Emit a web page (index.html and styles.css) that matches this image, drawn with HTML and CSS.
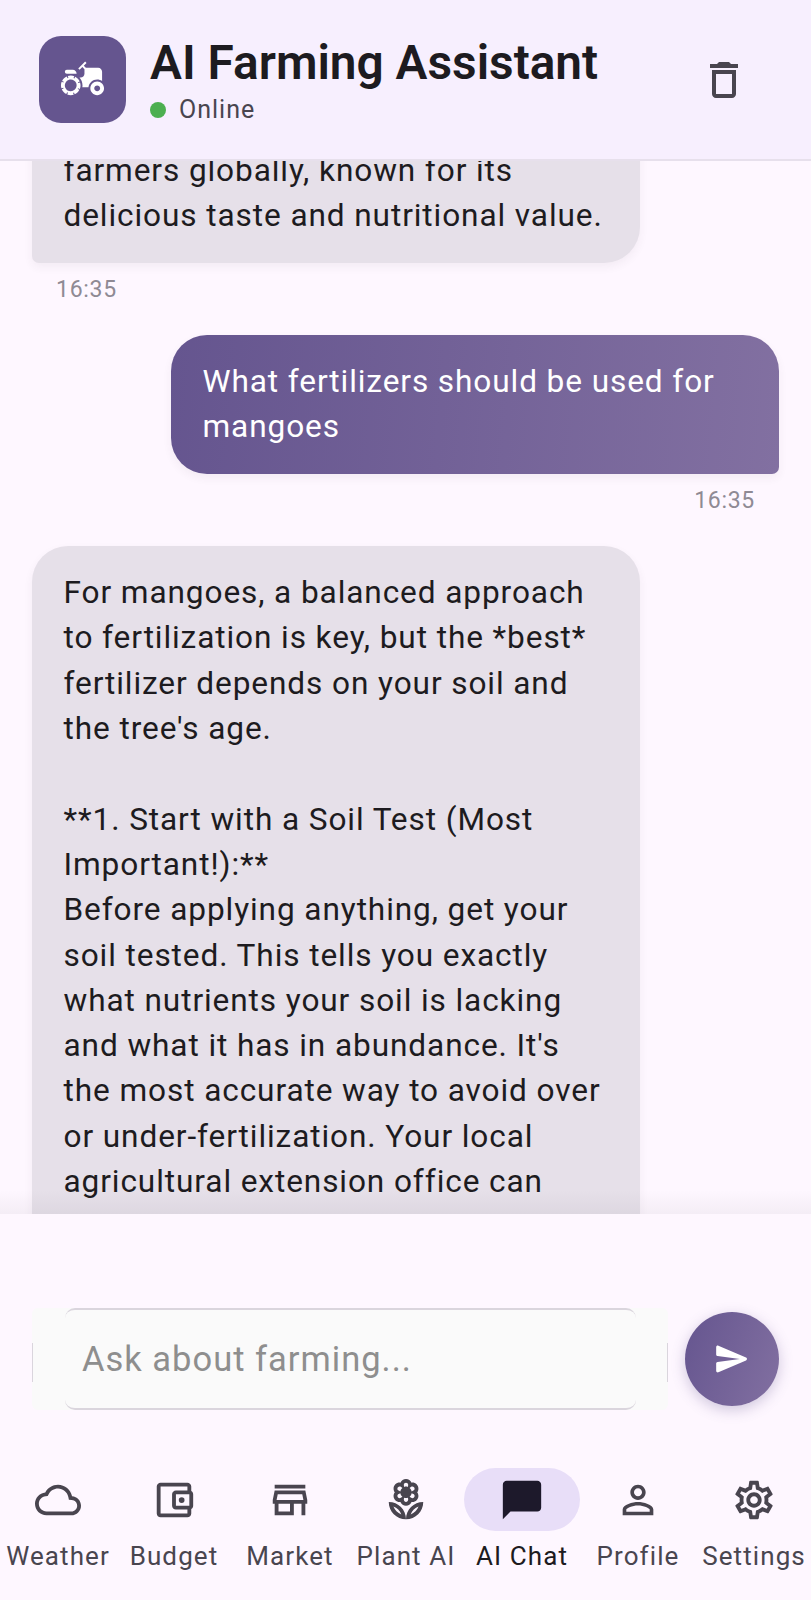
FILE: index.html
```html
<!DOCTYPE html>
<html lang="en">
<head>
  <meta charset="UTF-8">
  <meta name="viewport" content="width=device-width, initial-scale=1.0">
  <title>AI Farming Assistant</title>
  <link rel="stylesheet" href="styles.css">
</head>
<body>
  <div class="app">
    <header class="app-header">
      <div class="logo">
        <svg viewBox="0 0 24 24" width="47" height="47"><path d="M19.5 12c.93 0 1.78.28 2.5.76V8c0-1.1-.9-2-2-2h-6.29l-1.06-1.06 1.41-1.41-.71-.71-3.53 3.53.71.71 1.41-1.41L13 6.71V9c0 1.1-.9 2-2 2h-.54c.95 1.06 1.54 2.46 1.54 4 0 .34-.04.67-.09 1h3.14c.25-2.25 2.14-4 4.45-4z"/><path d="M19.5 13c-1.93 0-3.5 1.57-3.5 3.5s1.57 3.5 3.5 3.5 3.5-1.57 3.5-3.5-1.57-3.5-3.5-3.5zm0 5c-.83 0-1.5-.67-1.5-1.5s.67-1.5 1.5-1.5 1.5.67 1.5 1.5-.67 1.5-1.5 1.5z"/><path d="M4 9h5c0-1.1-.9-2-2-2H4C3.45 7 3 7.45 3 8C3 8.55 3.45 9 4 9z"/><path d="M9.83 13.82l-.18-.47L10.58 13c-.46-1.06-1.28-1.91-2.31-2.43l-.4.89-.46-.21.4-.9C7.26 10.13 6.64 10 6 10c-.53 0-1.04.11-1.52.26l.34.91-.47.18L4 10.42c-1.06.46-1.91 1.28-2.43 2.31l.89.4-.21.46-.9-.4C1.13 13.74 1 14.36 1 15c0 .53.11 1.04.26 1.52l.91-.34.18.47-.93.35c.46 1.06 1.28 1.91 2.31 2.43l.4-.89.46.21-.4.9c.55.22 1.17.35 1.81.35.53 0 1.04-.11 1.52-.26l-.34-.91.47-.18L8 19.58c1.06-.46 1.91-1.28 2.43-2.31l-.89-.4.21-.46.9.4c.22-.55.35-1.17.35-1.81 0-.53-.11-1.04-.26-1.52L9.83 13.82zM7.15 17.77c-1.53.63-3.29-.09-3.92-1.62-.63-1.53.09-3.29 1.62-3.92 1.53-.63 3.29.09 3.92 1.62C9.41 15.38 8.68 17.14 7.15 17.77z"/></svg>
      </div>
      <div class="header-text">
        <div class="title">AI Farming Assistant</div>
        <div class="status"><span class="status-dot"></span>Online</div>
      </div>
      <svg class="trash" viewBox="0 0 24 24" width="48" height="48"><path d="M6 19c0 1.1.9 2 2 2h8c1.1 0 2-.9 2-2V7H6v12zM8 9h8v10H8V9zm7.5-5l-1-1h-5l-1 1H5v2h14V4z"/></svg>
    </header>

    <main class="chat">
      <div class="chat-inner">
        <div class="msg ai">
          <div class="bubble">farmers globally, known for its<br>delicious taste and nutritional value.</div>
          <div class="time">16:35</div>
        </div>
        <div class="msg user">
          <div class="bubble">What fertilizers should be used for<br>mangoes</div>
          <div class="time">16:35</div>
        </div>
        <div class="msg ai">
          <div class="bubble">For mangoes, a balanced approach<br>to fertilization is key, but the *best*<br>fertilizer depends on your soil and<br>the tree's age.<br><br>**1. Start with a Soil Test (Most<br>Important!):**<br>Before applying anything, get your<br>soil tested. This tells you exactly<br>what nutrients your soil is lacking<br>and what it has in abundance. It's<br>the most accurate way to avoid over<br>or under-fertilization. Your local<br>agricultural extension office can<br>help with this.</div>
        </div>
      </div>
    </main>

    <section class="composer">
      <div class="input">Ask about farming...</div>
      <button class="send">
        <svg viewBox="0 0 24 24" width="38" height="38"><path d="M3.4 20.4l17.45-7.48c.81-.35.81-1.49 0-1.84L3.4 3.6c-.66-.29-1.39.2-1.39.91L2 9.12c0 .5.37.93.87.99L17 12 2.87 13.88c-.5.07-.87.5-.87 1l.01 4.61c0 .71.73 1.2 1.39.91z"/></svg>
      </button>
    </section>

    <nav class="bottom-nav">
      <div class="nav-item">
        <div class="nav-icon"><svg viewBox="0 0 24 24"><path d="M12 6c2.62 0 4.88 1.86 5.39 4.43l.3 1.5 1.53.11c1.56.1 2.78 1.41 2.78 2.96 0 1.65-1.35 3-3 3H6c-2.21 0-4-1.79-4-4 0-2.05 1.53-3.76 3.56-3.97l1.07-.11.5-.95C8.08 7.14 9.94 6 12 6m0-2C9.11 4 6.6 5.64 5.35 8.04 2.34 8.36 0 10.91 0 14c0 3.31 2.69 6 6 6h13c2.76 0 5-2.24 5-5 0-2.64-2.05-4.78-4.65-4.96C18.67 6.59 15.64 4 12 4z"/></svg></div>
        <span class="nav-label">Weather</span>
      </div>
      <div class="nav-item">
        <div class="nav-icon"><svg viewBox="0 0 24 24"><path d="M21 7.28V5c0-1.1-.9-2-2-2H5c-1.11 0-2 .9-2 2v14c0 1.1.89 2 2 2h14c1.1 0 2-.9 2-2v-2.28c.59-.35 1-.98 1-1.72V9c0-.74-.41-1.37-1-1.72zM20 9v6h-7V9h7zM5 19V5h14v2h-6c-1.1 0-2 .9-2 2v6c0 1.1.9 2 2 2h6v2H5z"/><circle cx="16" cy="12" r="1.5"/></svg></div>
        <span class="nav-label">Budget</span>
      </div>
      <div class="nav-item">
        <div class="nav-icon"><svg viewBox="0 0 24 24"><path d="M20 4H4v2h16V4zm1 10v-2l-1-5H4l-1 5v2h1v6h10v-6h4v6h2v-6h1zm-9 4H6v-4h6v4zm-7-6l.6-3h12.8l.6 3H5z"/></svg></div>
        <span class="nav-label">Market</span>
      </div>
      <div class="nav-item">
        <div class="nav-icon"><svg viewBox="0 0 24 24"><path d="M8.66 13.07c.15 0 .29-.01.43-.03C9.56 14.19 10.69 15 12 15s2.44-.81 2.91-1.96c.14.02.28.03.43.03 1.73 0 3.14-1.41 3.14-3.14 0-.71-.25-1.39-.67-1.93.43-.54.67-1.22.67-1.93 0-1.73-1.41-3.14-3.14-3.14-.15 0-.29.01-.43.03C14.44 1.81 13.31 1 12 1s-2.44.81-2.91 1.96c-.14-.02-.28-.03-.43-.03-1.73 0-3.14 1.41-3.14 3.14 0 .71.25 1.39.67 1.93-.43.54-.68 1.22-.68 1.93 0 1.73 1.41 3.14 3.15 3.14zM12 13c-.62 0-1.12-.49-1.14-1.1l.12-1.09c.32.12.66.19 1.02.19s.71-.07 1.03-.19l.11 1.09c-.02.61-.52 1.1-1.14 1.1zm3.34-1.93c-.24 0-.46-.07-.64-.2l-.81-.57c.55-.45.94-1.09 1.06-1.83l.88.42c.4.19.66.59.66 1.03 0 .64-.52 1.15-1.15 1.15zm-.65-5.94c.2-.13.42-.2.65-.2.63 0 1.14.51 1.14 1.14 0 .44-.25.83-.66 1.03l-.88.42c-.12-.74-.51-1.38-1.07-1.83l.82-.56zM12 3c.62 0 1.12.49 1.14 1.1l-.11 1.09C12.71 5.07 12.36 5 12 5s-.7.07-1.02.19l-.12-1.09c.02-.61.52-1.1 1.14-1.1zM8.66 4.93c.24 0 .46.07.64.2l.81.56c-.55.45-.94 1.09-1.06 1.83l-.88-.42c-.4-.2-.66-.59-.66-1.03 0-.63.52-1.14 1.15-1.14zM8.17 8.9l.88-.42c.12.74.51 1.38 1.07 1.83l-.81.55c-.2.13-.42.2-.65.2-.63 0-1.14-.51-1.14-1.14-.01-.43.25-.82.65-1.02zM12 22c4.97 0 9-4.03 9-9-4.97 0-9 4.03-9 9zm2.44-2.44c.71-1.9 2.22-3.42 4.12-4.12-.71 1.9-2.22 3.41-4.12 4.12zM3 13c0 4.97 4.03 9 9 9 0-4.97-4.03-9-9-9zm2.44 2.44c1.9.71 3.42 2.22 4.12 4.12-1.9-.71-3.41-2.22-4.12-4.12z"/><circle cx="12" cy="8" r="2.5"/></svg></div>
        <span class="nav-label">Plant AI</span>
      </div>
      <div class="nav-item active">
        <div class="nav-icon"><svg viewBox="0 0 24 24"><path d="M20 2H4c-1.1 0-2 .9-2 2v18l4-4h14c1.1 0 2-.9 2-2V4c0-1.1-.9-2-2-2z"/></svg></div>
        <span class="nav-label">AI Chat</span>
      </div>
      <div class="nav-item">
        <div class="nav-icon"><svg viewBox="0 0 24 24"><path d="M12 5.9c1.16 0 2.1.94 2.1 2.1s-.94 2.1-2.1 2.1S9.9 9.16 9.9 8s.94-2.1 2.1-2.1m0 9c2.97 0 6.1 1.46 6.1 2.1v1.1H5.9V17c0-.64 3.13-2.1 6.1-2.1M12 4C9.79 4 8 5.79 8 8s1.79 4 4 4 4-1.79 4-4-1.79-4-4-4zm0 9c-2.67 0-8 1.34-8 4v3h16v-3c0-2.66-5.33-4-8-4z"/></svg></div>
        <span class="nav-label">Profile</span>
      </div>
      <div class="nav-item">
        <div class="nav-icon"><svg viewBox="0 0 24 24"><path d="M19.43 12.98c.04-.32.07-.64.07-.98 0-.34-.03-.66-.07-.98l2.11-1.65c.19-.15.24-.42.12-.64l-2-3.46c-.09-.16-.26-.25-.44-.25-.06 0-.12.01-.17.03l-2.49 1c-.52-.4-1.08-.73-1.69-.98l-.38-2.65C14.46 2.18 14.25 2 14 2h-4c-.25 0-.46.18-.49.42l-.38 2.65c-.61.25-1.17.59-1.69.98l-2.49-1c-.06-.02-.12-.03-.18-.03-.17 0-.34.09-.43.25l-2 3.46c-.13.22-.07.49.12.64l2.11 1.65c-.04.32-.07.65-.07.98 0 .33.03.66.07.98l-2.11 1.65c-.19.15-.24.42-.12.64l2 3.46c.09.16.26.25.44.25.06 0 .12-.01.17-.03l2.49-1c.52.4 1.08.73 1.69.98l.38 2.65c.03.24.24.42.49.42h4c.25 0 .46-.18.49-.42l.38-2.65c.61-.25 1.17-.59 1.69-.98l2.49 1c.06.02.12.03.18.03.17 0 .34-.09.43-.25l2-3.46c.12-.22.07-.49-.12-.64l-2.11-1.65zm-1.98-1.71c.04.31.05.52.05.73 0 .21-.02.43-.05.73l-.14 1.13.89.7 1.08.84-.7 1.21-1.27-.51-1.04-.42-.9.68c-.43.32-.84.56-1.25.73l-1.06.43-.16 1.13-.2 1.35h-1.4l-.19-1.35-.16-1.13-1.06-.43c-.43-.18-.83-.41-1.23-.71l-.91-.7-1.06.43-1.27.51-.7-1.21 1.08-.84.89-.7-.14-1.13c-.03-.31-.05-.54-.05-.74s.02-.43.05-.73l.14-1.13-.89-.7-1.08-.84.7-1.21 1.27.51 1.04.42.9-.68c.43-.32.84-.56 1.25-.73l1.06-.43.16-1.13.2-1.35h1.39l.19 1.35.16 1.13 1.06.43c.43.18.83.41 1.23.71l.91.7 1.06-.43 1.27-.51.7 1.21-1.07.85-.89.7.14 1.13zM12 8c-2.21 0-4 1.79-4 4s1.79 4 4 4 4-1.79 4-4-1.79-4-4-4zm0 6c-1.1 0-2-.9-2-2s.9-2 2-2 2 .9 2 2-.9 2-2 2z"/></svg></div>
        <span class="nav-label">Settings</span>
      </div>
    </nav>
  </div>
</body>
</html>
```

FILE: styles.css
```css
* {
  box-sizing: border-box;
}

body {
  margin: 0;
  background-color: #FEF7FF;
  font-family: Roboto, sans-serif;
}

.app {
  width: 811px;
  height: 1600px;
  display: flex;
  flex-direction: column;
  overflow: hidden;
}

.app-header {
  height: 161px;
  flex-shrink: 0;
  display: flex;
  align-items: center;
  padding: 0 0 0 39px;
  background-color: #F7EFFE;
  border-bottom: 2px solid #E7E0EC;
  position: relative;
  z-index: 2;
}

.logo {
  width: 87px;
  height: 87px;
  border-radius: 22px;
  background-color: #65558F;
  display: flex;
  justify-content: center;
  align-items: center;
  margin-right: 24px;
  flex-shrink: 0;
}

.logo svg {
  fill: #fff;
}

.header-text {
  flex: 1;
  padding-top: 4px;
}

.title {
  font-size: 47.8px;
  font-weight: 600;
  line-height: 52px;
  color: #1D1B20;
}

.status {
  display: flex;
  align-items: center;
  font-size: 25px;
  line-height: 34px;
  letter-spacing: 1px;
  margin-top: 4px;
  color: #49454F;
}

.status-dot {
  width: 16px;
  height: 16px;
  border-radius: 50%;
  background-color: #4CAF50;
  margin-right: 13px;
}

.trash {
  fill: #49454F;
  margin-right: 63px;
}

.chat {
  height: 1053px;
  flex-shrink: 0;
  overflow: hidden;
  position: relative;
}

/* soft shadow the composer throws up over the messages */
.chat::after {
  content: "";
  position: absolute;
  left: 0;
  right: 0;
  bottom: 0;
  height: 24px;
  background: linear-gradient(rgba(60, 50, 70, 0), rgba(60, 50, 70, 0.05));
}

.chat-inner {
  margin-top: -37px;
  padding: 0 32px;
}

.msg {
  display: flex;
  flex-direction: column;
  margin-bottom: 30.5px;
}

.msg.ai {
  align-items: flex-start;
}

.msg.user {
  align-items: flex-end;
}

.bubble {
  width: 608px;
  padding: 24px 31.5px;
  font-size: 31.6px;
  line-height: 45.3px;
  letter-spacing: 0.9px;
  white-space: nowrap;
  box-shadow: 0 4px 10px rgba(60, 50, 70, 0.06);
}

.ai .bubble {
  background-color: #E6E0E9;
  color: #1D1B20;
  border-radius: 36px 36px 36px 7px;
}

.user .bubble {
  background: linear-gradient(95deg, #65558F, #8270A1);
  color: #fff;
  border-radius: 36px 36px 7px 36px;
}

.time {
  font-size: 23px;
  line-height: 30px;
  letter-spacing: 0.7px;
  color: #8F8A94;
  margin-top: 12px;
}

.ai .time {
  margin-left: 24px;
}

.user .time {
  margin-right: 24px;
}

.composer {
  height: 226px;
  flex-shrink: 0;
  display: flex;
  align-items: center;
  gap: 17px;
  padding: 94px 32px 30px;
  background-color: #FEF7FF;
  position: relative;
  z-index: 1;
}

.input {
  width: 636px;
  height: 102px;
  display: flex;
  align-items: center;
  padding-left: 50px;
  background-color: #FAFAFA;
  border-radius: 6px;
  font-size: 34.5px;
  letter-spacing: 1px;
  color: #8E8E8E;
  position: relative;
}

/* the outline only shows along the straight runs, the corners stay open */
.input::before {
  content: "";
  position: absolute;
  top: 0;
  bottom: 0;
  left: 33px;
  right: 32px;
  border-top: 2px solid #DAD5DD;
  border-bottom: 2px solid #DAD5DD;
  border-radius: 10px;
}

.input::after {
  content: "";
  position: absolute;
  top: 35px;
  bottom: 28px;
  left: 0;
  right: 0;
  border-left: 1px solid #DAD5DD;
  border-right: 1px solid #DAD5DD;
}

.send {
  width: 94px;
  height: 94px;
  padding: 0;
  border: none;
  border-radius: 50%;
  background: linear-gradient(110deg, #65558F, #8270A1);
  box-shadow: 0 4px 14px rgba(101, 85, 143, 0.3);
  display: flex;
  justify-content: center;
  align-items: center;
  flex-shrink: 0;
}

.send svg {
  fill: #fff;
}

.bottom-nav {
  flex: 1;
  display: grid;
  grid-template-columns: repeat(7, 1fr);
  padding-top: 28px;
}

.nav-item {
  display: flex;
  flex-direction: column;
  align-items: center;
}

.nav-icon {
  width: 116px;
  height: 63px;
  border-radius: 32px;
  display: flex;
  justify-content: center;
  align-items: center;
}

.nav-icon svg {
  width: 46px;
  height: 46px;
  fill: #49454F;
}

.nav-label {
  font-size: 26px;
  font-weight: 450;
  line-height: 36px;
  letter-spacing: 1.1px;
  margin-top: 7px;
  color: #49454F;
  white-space: nowrap;
}

.active .nav-icon {
  background-color: #E8DEF8;
}

.active .nav-icon svg {
  fill: #1D192B;
}

.active .nav-label {
  color: #1D1B20;
}
```
